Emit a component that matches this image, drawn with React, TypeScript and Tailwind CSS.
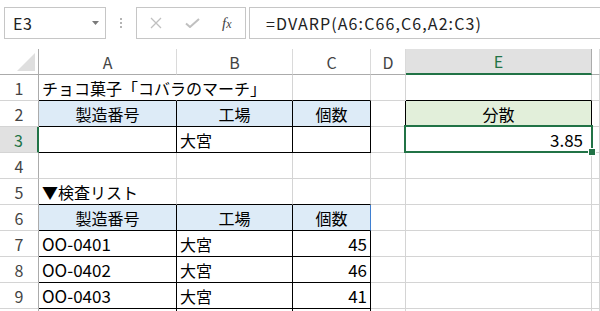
import React from 'react';

type Align = 'left' | 'center' | 'right';
type CellDef = { text?: string; align?: Align; fill?: 'blue' | 'green'; overflow?: boolean; pr?: string; latin?: boolean };

const COLS = ['A', 'B', 'C', 'D', 'E', 'F'];
const ROWS = [1, 2, 3, 4, 5, 6, 7, 8, 9, 10];

const data: Record<string, CellDef> = {
  A1: { text: 'チョコ菓子「コバラのマーチ」', overflow: true },
  A2: { text: '製造番号', align: 'center', fill: 'blue' },
  B2: { text: '工場', align: 'center', fill: 'blue' },
  C2: { text: '個数', align: 'center', fill: 'blue' },
  E2: { text: '分散', align: 'center', fill: 'green' },
  B3: { text: '大宮' },
  E3: { text: '3.85', align: 'right', pr: 'pr-[8px]', latin: true },
  A5: { text: '▼検査リスト' },
  A6: { text: '製造番号', align: 'center', fill: 'blue' },
  B6: { text: '工場', align: 'center', fill: 'blue' },
  C6: { text: '個数', align: 'center', fill: 'blue' },
  A7: { text: 'OO-0401', latin: true },
  B7: { text: '大宮' },
  C7: { text: '45', align: 'right', latin: true },
  A8: { text: 'OO-0402', latin: true },
  B8: { text: '大宮' },
  C8: { text: '46', align: 'right', latin: true },
  A9: { text: 'OO-0403', latin: true },
  B9: { text: '大宮' },
  C9: { text: '41', align: 'right', latin: true },
};

function inTable(c: number, r: number): boolean {
  if (c >= 0 && c <= 2 && r >= 2 && r <= 3) return true;
  if (c === 4 && r >= 2 && r <= 3) return true;
  if (c >= 0 && c <= 2 && r >= 6 && r <= 12) return true;
  return false;
}

function Cell({ c, r }: { c: number; r: number }) {
  const key = COLS[c] + r;
  const d = data[key] || {};
  const rightBlack = inTable(c, r) || inTable(c + 1, r);
  const bottomBlack = inTable(c, r) || inTable(c, r + 1);
  let rClass = rightBlack ? 'border-r-black' : 'border-r-[#d4d4d4]';
  if (d.overflow) rClass = 'border-r-white';
  if (key === 'C6') rClass = 'border-r-[#3f7fd0]';
  const bClass = bottomBlack ? 'border-b-black' : 'border-b-[#d4d4d4]';
  const fill = d.fill === 'blue' ? 'bg-[#ddebf7]' : d.fill === 'green' ? 'bg-[#e2efda]' : 'bg-white';
  const justify = d.align === 'center' ? 'justify-center' : d.align === 'right' ? 'justify-end' : 'justify-start';
  const pad = d.align === 'right' ? d.pr || 'pr-[3px]' : d.align === 'center' ? '' : 'pl-[3px]';
  const size = d.latin ? 'text-[17px]' : 'text-[16px]';
  return (
    <div
      className={`h-[26px] border-r border-b ${rClass} ${bClass} ${fill} flex items-center ${justify} ${pad} ${d.overflow ? 'relative z-10 overflow-visible' : 'overflow-hidden'} whitespace-nowrap ${size} text-black`}
    >
      {d.text}
    </div>
  );
}

export default function App() {
  return (
    <div className="w-[600px] h-[311px] overflow-hidden bg-white font-['Noto_Sans_CJK_JP','Noto_Sans',sans-serif] leading-none">
      {/* Formula bar */}
      <div className="h-[49px] flex items-start pt-[7px]">
        <div className="ml-[4px] w-[102px] h-[32px] border border-[#c6c6c6] flex items-center pl-[8px] pr-[6px]">
          <span className="text-[16px] text-[#222] tracking-[0.5px]">E3</span>
          <svg className="ml-auto" width="7" height="4" viewBox="0 0 7 4">
            <path d="M0 0 L7 0 L3.5 4 Z" fill="#7a7a7a" />
          </svg>
        </div>
        <div className="w-[30px] h-[32px] flex flex-col items-center justify-center gap-[2px]">
          <div className="w-[2px] h-[2px] bg-[#b4b4b4]" />
          <div className="w-[2px] h-[2px] bg-[#b4b4b4]" />
          <div className="w-[2px] h-[2px] bg-[#b4b4b4]" />
        </div>
        <div className="w-[110px] h-[32px] border border-[#c6c6c6] flex items-center">
          <svg className="ml-[12px]" width="14" height="12" viewBox="0 0 14 12">
            <path d="M2 1 L12 11 M12 1 L2 11" stroke="#c0c0c0" strokeWidth="1.3" />
          </svg>
          <svg className="ml-[22px]" width="15" height="10" viewBox="0 0 15 10">
            <path d="M1 5.5 L5 9 L14 1" stroke="#c0c0c0" strokeWidth="2" fill="none" />
          </svg>
          <span className="ml-[22px] font-['Liberation_Serif',serif] italic text-[15px] text-[#444]">
            f<span className="text-[12px]">x</span>
          </span>
        </div>
        <div className="ml-[3px] flex-1 h-[32px] border border-r-0 border-[#c6c6c6] flex items-center pl-[16px]">
          <span className="text-[16px] text-[#222] tracking-[1.1px]">=DVARP(A6:C66,C6,A2:C3)</span>
        </div>
      </div>

      {/* Grid */}
      <div className="relative">
        <div className="grid grid-cols-[39px_138px_116px_78px_35px_186px_1fr]">
          {/* header row */}
          <div className="h-[26px] border-r border-b border-r-[#ababab] border-b-[#ababab] bg-white relative">
            <svg className="absolute left-[17px] top-[4px]" width="18" height="18" viewBox="0 0 18 18">
              <path d="M18 0 L18 18 L0 18 Z" fill="#dfdfdf" />
            </svg>
          </div>
          {COLS.map((col) =>
            col === 'E' ? (
              <div
                key={col}
                className="h-[26px] border-r border-r-[#ababab] border-b-2 border-b-[#217346] bg-[#e1e1e1] flex items-center justify-center text-[16px] text-[#217346]"
              >
                {col}
              </div>
            ) : (
              <div
                key={col}
                className="h-[26px] border-r border-b border-r-[#dadada] border-b-[#ababab] bg-white flex items-center justify-center text-[16px] text-[#444]"
              >
                {col === 'F' ? '' : col}
              </div>
            )
          )}
          {ROWS.map((r) => (
            <React.Fragment key={r}>
              {r === 3 ? (
                <div className="h-[26px] border-r-2 border-b border-r-[#217346] border-b-[#d4d4d4] bg-[#e1e1e1] flex items-center justify-center text-[16px] text-[#217346]">
                  {r}
                </div>
              ) : (
                <div className="h-[26px] border-r border-b border-r-[#ababab] border-b-[#d4d4d4] bg-white flex items-center justify-center text-[16px] text-[#444]">
                  {r === 10 ? '' : r}
                </div>
              )}
              {COLS.map((_, c) => (
                <Cell key={c} c={c} r={r} />
              ))}
            </React.Fragment>
          ))}
        </div>
        {/* selection */}
        <div className="absolute left-[404px] top-[76px] w-[189px] h-[28px] border-2 border-[#217346] z-20 pointer-events-none" />
        <div className="absolute left-[588px] top-[99px] w-[8px] h-[8px] bg-[#217346] border border-white z-30" />
      </div>
    </div>
  );
}
